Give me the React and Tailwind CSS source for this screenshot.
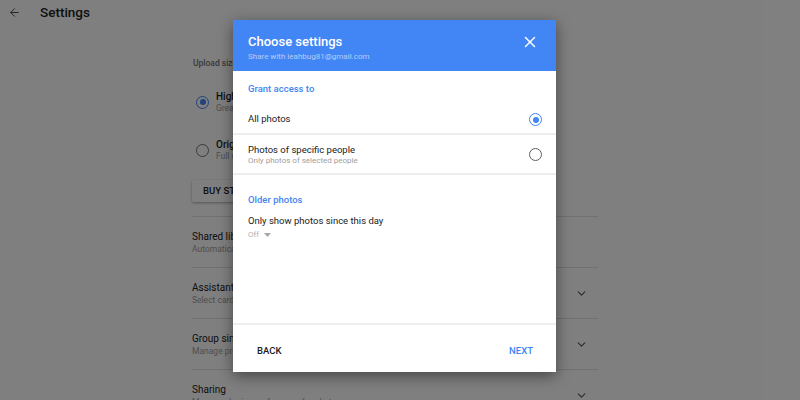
import React from "react";
import { ArrowLeft, ChevronDown, X } from "lucide-react";

const font = { fontFamily: "Roboto, 'Liberation Sans', sans-serif" };

const Radio = ({ checked, muted }) => (
  <span
    className={
      "flex items-center justify-center w-[13px] h-[13px] rounded-full border-[1.5px] " +
      (checked ? "border-[#4285f4]" : muted ? "border-[#757575]" : "border-[#5f5f5f]")
    }
  >
    {checked && <span className="w-[6px] h-[6px] rounded-full bg-[#4285f4]" />}
  </span>
);

const SettingRow = ({ title, subtitle, chevron }) => (
  <div className="h-[51px] flex items-center justify-between border-b border-[#e0e0e0]">
    <div className="flex flex-col gap-[1px]">
      <span className="text-[10px] leading-[13px] text-[#212121]">{title}</span>
      <span className="text-[8.5px] leading-[11px] text-[#9e9e9e]">{subtitle}</span>
    </div>
    {chevron && <ChevronDown className="mr-[10px] w-[13px] h-[13px] text-[#555]" strokeWidth={2} />}
  </div>
);

// the settings page that sits under the dimmed overlay
const SettingsPage = () => (
  <div className="flex flex-col">
    <div className="h-[24px] flex items-center">
      <ArrowLeft className="ml-[8px] w-[13px] h-[13px] text-[#333]" strokeWidth={1.6} />
      <span className="ml-[19px] text-[13.5px] font-medium text-[#212121]">Settings</span>
    </div>
    <div className="ml-[192px] w-[406px] flex flex-col">
      <div className="pt-[33px] text-[8.5px] leading-[12px] font-medium text-[#757575] pl-[1px]">
        Upload size for photos and videos
      </div>
      <div className="mt-[21px] flex items-center gap-[7px] pl-[4px]">
        <Radio checked />
        <div className="flex flex-col">
          <span className="text-[10px] leading-[13px] font-medium text-[#212121]">High quality (free unlimited storage)</span>
          <span className="text-[8.5px] leading-[11px] text-[#9e9e9e]">Great visual quality at reduced file size</span>
        </div>
      </div>
      <div className="mt-[24px] flex items-center gap-[7px] pl-[4px]">
        <Radio muted />
        <div className="flex flex-col">
          <span className="text-[10px] leading-[13px] font-medium text-[#212121]">Original</span>
          <span className="text-[8.5px] leading-[11px] text-[#9e9e9e]">Full resolution that counts against your quota</span>
        </div>
      </div>
      <div className="mt-[18px] self-start h-[22px] px-[11px] flex items-center bg-white rounded-[2px] shadow-[0_1px_3px_rgba(0,0,0,0.35)] text-[9.5px] font-medium text-[#212121]">
        BUY STORAGE
      </div>
      <div className="mt-[14px] border-b border-[#e0e0e0]" />
      <SettingRow title="Shared libraries" subtitle="Automatically share photos with a partner" />
      <SettingRow title="Assistant cards" subtitle="Select card types to show in the assistant" chevron />
      <SettingRow title="Group similar faces" subtitle="Manage preferences for face grouping" chevron />
      <SettingRow title="Sharing" subtitle="Manage sharing preferences for photos" chevron />
    </div>
  </div>
);

export default function App() {
  return (
    <div style={font} className="relative w-[800px] h-[400px] overflow-hidden bg-white">
      <SettingsPage />
      <div className="absolute inset-0 bg-black/50" />

      {/* dialog */}
      <div className="absolute left-[233px] top-[20px] w-[323px] h-[352px] bg-white flex flex-col shadow-[0_4px_14px_rgba(0,0,0,0.45)]">
        <div className="h-[51px] bg-[#4285f4] flex items-start justify-between pl-[15px] pr-[17px]">
          <div className="flex flex-col pt-[13px]">
            <span className="text-[13px] leading-[17px] font-medium text-white">Choose settings</span>
            <span className="mt-[2px] text-[8px] leading-[10px] text-white/60">Share with leahbug81@gmail.com</span>
          </div>
          <X className="mt-[13px] w-[18px] h-[18px] text-white" strokeWidth={2} />
        </div>

        <div className="h-[35px] flex items-center px-[15px] pt-[1px] text-[9.5px] font-medium text-[#4285f4]">
          Grant access to
        </div>
        <div className="h-[29px] flex items-center justify-between pl-[15px] pr-[14px] border-b-2 border-[#eeeeee]">
          <span className="text-[9.5px] text-[#212121]">All photos</span>
          <Radio checked />
        </div>
        <div className="h-[40px] flex items-center justify-between pl-[15px] pr-[14px] border-b-2 border-[#eeeeee]">
          <div className="flex flex-col">
            <span className="text-[9.5px] leading-[13px] text-[#212121]">Photos of specific people</span>
            <span className="text-[8px] leading-[10px] text-[#a0a0a0]">Only photos of selected people</span>
          </div>
          <Radio />
        </div>

        <div className="flex-1 flex flex-col px-[15px]">
          <span className="pt-[19px] text-[9.5px] leading-[12px] font-medium text-[#4285f4]">Older photos</span>
          <span className="mt-[8px] text-[9.5px] leading-[13px] text-[#212121]">Only show photos since this day</span>
          <div className="mt-[2px] flex items-center gap-[5px] text-[8px] leading-[12px] text-[#b0b0b0]">
            Off
            <svg width="7" height="4" viewBox="0 0 7 4">
              <path d="M0 0 L7 0 L3.5 4 Z" fill="#a8a8a8" />
            </svg>
          </div>
        </div>

        <div className="h-[49px] border-t-2 border-[#eeeeee] flex items-center justify-between pl-[24px] pr-[23px] pt-[5px] text-[9.5px] font-medium">
          <span className="text-[#212121]">BACK</span>
          <span className="text-[#4285f4]">NEXT</span>
        </div>
      </div>
    </div>
  );
}
